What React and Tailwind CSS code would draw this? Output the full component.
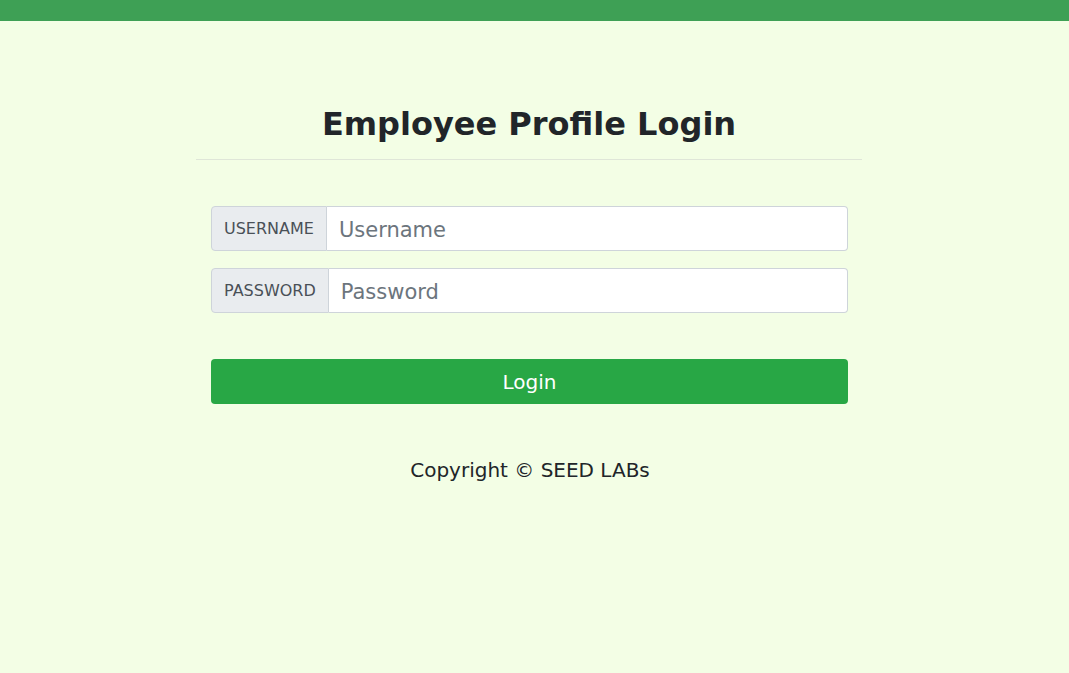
export default function App() {
  return (
    <div
      className="min-h-[673px] bg-[#f3fee5] text-[#212529]"
      style={{ fontFamily: '"DejaVu Sans", sans-serif' }}
    >
      <div className="h-[21px] bg-[#3ea055]" />

      <div className="flex justify-center pr-[11px]">
        <div className="w-[666px]">
          <h2 className="mt-[84px] text-center text-[32px] font-bold leading-[38px]">
            Employee Profile Login
          </h2>
          <hr className="mt-[16px] border-t border-[#dfe6d8]" />

          <form className="pl-[15px] pr-[14px] pt-[46px]">
            <div className="flex h-[45px]">
              <span className="flex items-center rounded-l border border-[#ced4da] bg-[#e9ecef] px-3 text-[16px] text-[#495057]">
                USERNAME
              </span>
              <input
                type="text"
                placeholder="Username"
                className="flex-1 rounded-r border border-l-0 border-[#ced4da] bg-white px-3 pt-[4px] text-[21px] text-[#495057] placeholder:text-[#6c757d] outline-none"
              />
            </div>
            <div className="mt-[17px] flex h-[45px]">
              <span className="flex items-center rounded-l border border-[#ced4da] bg-[#e9ecef] px-3 text-[16px] text-[#495057]">
                PASSWORD
              </span>
              <input
                type="password"
                placeholder="Password"
                className="flex-1 rounded-r border border-l-0 border-[#ced4da] bg-white px-3 pt-[4px] text-[21px] text-[#495057] placeholder:text-[#6c757d] outline-none"
              />
            </div>

            <button
              type="button"
              className="mt-[46px] h-[45px] w-full rounded bg-[#28a745] text-[20px] text-white"
            >
              Login
            </button>
          </form>

          <p className="mt-[51px] pl-[2px] text-center text-[20px] leading-[30px]">
            Copyright © SEED LABs
          </p>
        </div>
      </div>
    </div>
  );
}
